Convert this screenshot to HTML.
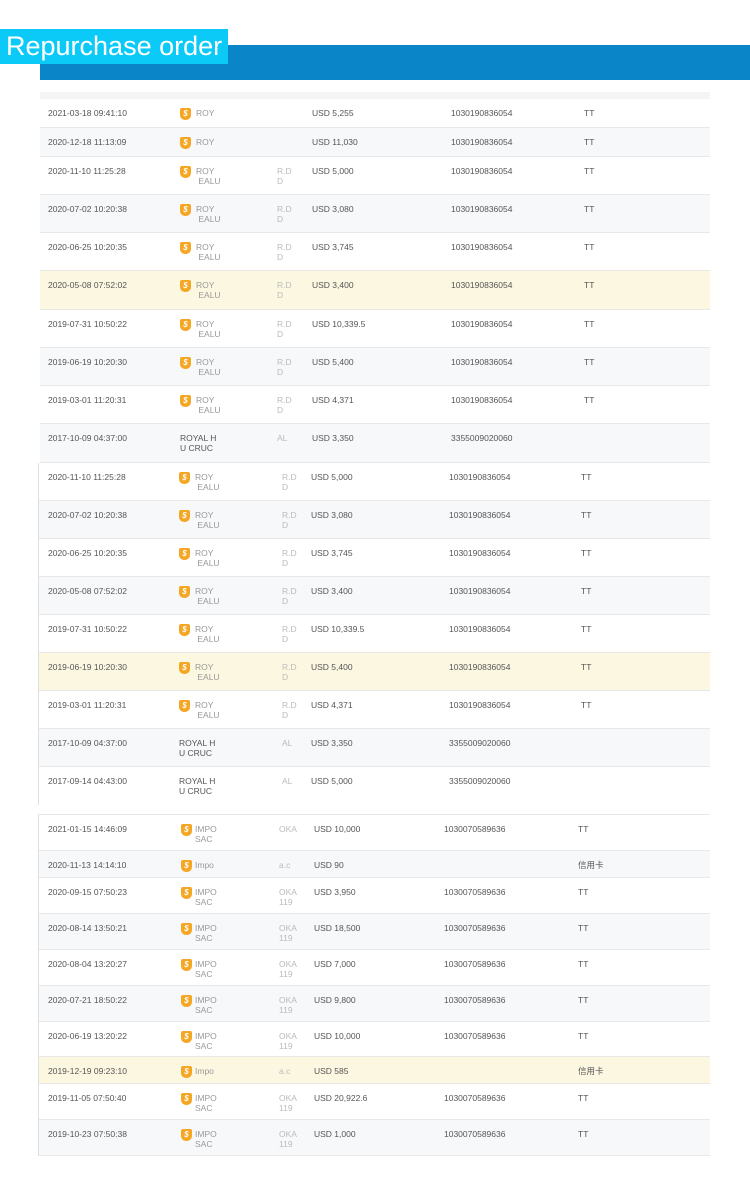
<!DOCTYPE html>
<html><head><meta charset="utf-8">
<style>
*{margin:0;padding:0;box-sizing:border-box}
html,body{width:750px;height:1196px;background:#fff;overflow:hidden;position:relative;font-family:"Liberation Sans","Noto Sans CJK SC",sans-serif;color:#555}
.bar{position:absolute;left:40px;top:45px;width:710px;height:35px;background:#0a86c8}
.ttl{position:absolute;left:0;top:29px;width:228px;height:35px;background:#0ccaf7;color:#fff;font-size:27px;line-height:35px;padding-left:6px}
.sec{position:absolute}
.r{position:absolute;left:0;right:0;border-bottom:1px solid #e8e8e8;font-size:8.5px;line-height:10px}
.g{background:#f7f8fa}
.y{background:#fcf7e1}
.r span{position:absolute;top:9px;white-space:nowrap}
.i{display:inline-block;width:11px;height:12px;background:#f5a623;border-radius:2px 2px 5px 5px;color:#fff;font-size:8px;line-height:12px;text-align:center;font-weight:bold}
.n{color:#999}
.r span.f{color:#bbb}
</style></head><body>
<div class="bar"></div>
<div class="ttl">Repurchase order</div>

<div class="sec" style="left:40px;top:92px;width:670px;height:371px;">
<div class="r" style="top:0;height:7px;background:#f5f5f5;border:none"></div>
<div class="r" style="top:7px;height:29px"><span style="left:8px">2021-03-18 09:41:10</span><span style="left:140px"><i class="i">$</i></span><span class="n" style="left:156px">ROY</span><span style="left:272px">USD 5,255</span><span style="left:411px">1030190836054</span><span style="left:544px">TT</span></div>
<div class="r g" style="top:36px;height:29px"><span style="left:8px">2020-12-18 11:13:09</span><span style="left:140px"><i class="i">$</i></span><span class="n" style="left:156px">ROY</span><span style="left:272px">USD 11,030</span><span style="left:411px">1030190836054</span><span style="left:544px">TT</span></div>
<div class="r" style="top:65px;height:38px"><span style="left:8px">2020-11-10 11:25:28</span><span style="left:140px"><i class="i">$</i></span><span class="n" style="left:156px">ROY<br>&nbsp;EALU</span><span class="f" style="left:237px">R.D<br>D</span><span style="left:272px">USD 5,000</span><span style="left:411px">1030190836054</span><span style="left:544px">TT</span></div>
<div class="r g" style="top:103px;height:38px"><span style="left:8px">2020-07-02 10:20:38</span><span style="left:140px"><i class="i">$</i></span><span class="n" style="left:156px">ROY<br>&nbsp;EALU</span><span class="f" style="left:237px">R.D<br>D</span><span style="left:272px">USD 3,080</span><span style="left:411px">1030190836054</span><span style="left:544px">TT</span></div>
<div class="r" style="top:141px;height:38px"><span style="left:8px">2020-06-25 10:20:35</span><span style="left:140px"><i class="i">$</i></span><span class="n" style="left:156px">ROY<br>&nbsp;EALU</span><span class="f" style="left:237px">R.D<br>D</span><span style="left:272px">USD 3,745</span><span style="left:411px">1030190836054</span><span style="left:544px">TT</span></div>
<div class="r y" style="top:179px;height:39px"><span style="left:8px">2020-05-08 07:52:02</span><span style="left:140px"><i class="i">$</i></span><span class="n" style="left:156px">ROY<br>&nbsp;EALU</span><span class="f" style="left:237px">R.D<br>D</span><span style="left:272px">USD 3,400</span><span style="left:411px">1030190836054</span><span style="left:544px">TT</span></div>
<div class="r" style="top:218px;height:38px"><span style="left:8px">2019-07-31 10:50:22</span><span style="left:140px"><i class="i">$</i></span><span class="n" style="left:156px">ROY<br>&nbsp;EALU</span><span class="f" style="left:237px">R.D<br>D</span><span style="left:272px">USD 10,339.5</span><span style="left:411px">1030190836054</span><span style="left:544px">TT</span></div>
<div class="r g" style="top:256px;height:38px"><span style="left:8px">2019-06-19 10:20:30</span><span style="left:140px"><i class="i">$</i></span><span class="n" style="left:156px">ROY<br>&nbsp;EALU</span><span class="f" style="left:237px">R.D<br>D</span><span style="left:272px">USD 5,400</span><span style="left:411px">1030190836054</span><span style="left:544px">TT</span></div>
<div class="r" style="top:294px;height:38px"><span style="left:8px">2019-03-01 11:20:31</span><span style="left:140px"><i class="i">$</i></span><span class="n" style="left:156px">ROY<br>&nbsp;EALU</span><span class="f" style="left:237px">R.D<br>D</span><span style="left:272px">USD 4,371</span><span style="left:411px">1030190836054</span><span style="left:544px">TT</span></div>
<div class="r g" style="top:332px;height:39px"><span style="left:8px">2017-10-09 04:37:00</span><span style="left:140px">ROYAL H<br>U CRUC</span><span class="f" style="left:237px">AL</span><span style="left:272px">USD 3,350</span><span style="left:411px">3355009020060</span></div>
</div>

<div class="sec" style="left:38px;top:463px;width:672px;height:342px;border-left:1px solid #e0e0e0">
<div class="r" style="top:0;height:38px"><span style="left:9px">2020-11-10 11:25:28</span><span style="left:140px"><i class="i">$</i></span><span class="n" style="left:156px">ROY<br>&nbsp;EALU</span><span class="f" style="left:243px">R.D<br>D</span><span style="left:272px">USD 5,000</span><span style="left:410px">1030190836054</span><span style="left:542px">TT</span></div>
<div class="r g" style="top:38px;height:38px"><span style="left:9px">2020-07-02 10:20:38</span><span style="left:140px"><i class="i">$</i></span><span class="n" style="left:156px">ROY<br>&nbsp;EALU</span><span class="f" style="left:243px">R.D<br>D</span><span style="left:272px">USD 3,080</span><span style="left:410px">1030190836054</span><span style="left:542px">TT</span></div>
<div class="r" style="top:76px;height:38px"><span style="left:9px">2020-06-25 10:20:35</span><span style="left:140px"><i class="i">$</i></span><span class="n" style="left:156px">ROY<br>&nbsp;EALU</span><span class="f" style="left:243px">R.D<br>D</span><span style="left:272px">USD 3,745</span><span style="left:410px">1030190836054</span><span style="left:542px">TT</span></div>
<div class="r g" style="top:114px;height:38px"><span style="left:9px">2020-05-08 07:52:02</span><span style="left:140px"><i class="i">$</i></span><span class="n" style="left:156px">ROY<br>&nbsp;EALU</span><span class="f" style="left:243px">R.D<br>D</span><span style="left:272px">USD 3,400</span><span style="left:410px">1030190836054</span><span style="left:542px">TT</span></div>
<div class="r" style="top:152px;height:38px"><span style="left:9px">2019-07-31 10:50:22</span><span style="left:140px"><i class="i">$</i></span><span class="n" style="left:156px">ROY<br>&nbsp;EALU</span><span class="f" style="left:243px">R.D<br>D</span><span style="left:272px">USD 10,339.5</span><span style="left:410px">1030190836054</span><span style="left:542px">TT</span></div>
<div class="r y" style="top:190px;height:38px"><span style="left:9px">2019-06-19 10:20:30</span><span style="left:140px"><i class="i">$</i></span><span class="n" style="left:156px">ROY<br>&nbsp;EALU</span><span class="f" style="left:243px">R.D<br>D</span><span style="left:272px">USD 5,400</span><span style="left:410px">1030190836054</span><span style="left:542px">TT</span></div>
<div class="r" style="top:228px;height:38px"><span style="left:9px">2019-03-01 11:20:31</span><span style="left:140px"><i class="i">$</i></span><span class="n" style="left:156px">ROY<br>&nbsp;EALU</span><span class="f" style="left:243px">R.D<br>D</span><span style="left:272px">USD 4,371</span><span style="left:410px">1030190836054</span><span style="left:542px">TT</span></div>
<div class="r g" style="top:266px;height:38px"><span style="left:9px">2017-10-09 04:37:00</span><span style="left:140px">ROYAL H<br>U CRUC</span><span class="f" style="left:243px">AL</span><span style="left:272px">USD 3,350</span><span style="left:410px">3355009020060</span></div>
<div class="r" style="top:304px;height:38px;border:none"><span style="left:9px">2017-09-14 04:43:00</span><span style="left:140px">ROYAL H<br>U CRUC</span><span class="f" style="left:243px">AL</span><span style="left:272px">USD 5,000</span><span style="left:410px">3355009020060</span></div>
</div>

<div class="sec" style="left:38px;top:814px;width:672px;height:342px;border-left:1px solid #e0e0e0;border-top:1px solid #e8e8e8">
<div class="r" style="top:0;height:36px"><span style="left:9px">2021-01-15 14:46:09</span><span style="left:142px"><i class="i">$</i></span><span class="n" style="left:156px">IMPO<br>SAC</span><span class="f" style="left:240px">OKA</span><span style="left:275px">USD 10,000</span><span style="left:405px">1030070589636</span><span style="left:539px">TT</span></div>
<div class="r g" style="top:36px;height:27px"><span style="left:9px">2020-11-13 14:14:10</span><span style="left:142px"><i class="i">$</i></span><span class="n" style="left:156px">Impo</span><span class="f" style="left:240px">a.c</span><span style="left:275px">USD 90</span><span style="left:539px">信用卡</span></div>
<div class="r" style="top:63px;height:36px"><span style="left:9px">2020-09-15 07:50:23</span><span style="left:142px"><i class="i">$</i></span><span class="n" style="left:156px">IMPO<br>SAC</span><span class="f" style="left:240px">OKA<br>119</span><span style="left:275px">USD 3,950</span><span style="left:405px">1030070589636</span><span style="left:539px">TT</span></div>
<div class="r g" style="top:99px;height:36px"><span style="left:9px">2020-08-14 13:50:21</span><span style="left:142px"><i class="i">$</i></span><span class="n" style="left:156px">IMPO<br>SAC</span><span class="f" style="left:240px">OKA<br>119</span><span style="left:275px">USD 18,500</span><span style="left:405px">1030070589636</span><span style="left:539px">TT</span></div>
<div class="r" style="top:135px;height:36px"><span style="left:9px">2020-08-04 13:20:27</span><span style="left:142px"><i class="i">$</i></span><span class="n" style="left:156px">IMPO<br>SAC</span><span class="f" style="left:240px">OKA<br>119</span><span style="left:275px">USD 7,000</span><span style="left:405px">1030070589636</span><span style="left:539px">TT</span></div>
<div class="r g" style="top:171px;height:36px"><span style="left:9px">2020-07-21 18:50:22</span><span style="left:142px"><i class="i">$</i></span><span class="n" style="left:156px">IMPO<br>SAC</span><span class="f" style="left:240px">OKA<br>119</span><span style="left:275px">USD 9,800</span><span style="left:405px">1030070589636</span><span style="left:539px">TT</span></div>
<div class="r" style="top:207px;height:35px"><span style="left:9px">2020-06-19 13:20:22</span><span style="left:142px"><i class="i">$</i></span><span class="n" style="left:156px">IMPO<br>SAC</span><span class="f" style="left:240px">OKA<br>119</span><span style="left:275px">USD 10,000</span><span style="left:405px">1030070589636</span><span style="left:539px">TT</span></div>
<div class="r y" style="top:242px;height:27px"><span style="left:9px">2019-12-19 09:23:10</span><span style="left:142px"><i class="i">$</i></span><span class="n" style="left:156px">Impo</span><span class="f" style="left:240px">a.c</span><span style="left:275px">USD 585</span><span style="left:539px">信用卡</span></div>
<div class="r" style="top:269px;height:36px"><span style="left:9px">2019-11-05 07:50:40</span><span style="left:142px"><i class="i">$</i></span><span class="n" style="left:156px">IMPO<br>SAC</span><span class="f" style="left:240px">OKA<br>119</span><span style="left:275px">USD 20,922.6</span><span style="left:405px">1030070589636</span><span style="left:539px">TT</span></div>
<div class="r g" style="top:305px;height:36px"><span style="left:9px">2019-10-23 07:50:38</span><span style="left:142px"><i class="i">$</i></span><span class="n" style="left:156px">IMPO<br>SAC</span><span class="f" style="left:240px">OKA<br>119</span><span style="left:275px">USD 1,000</span><span style="left:405px">1030070589636</span><span style="left:539px">TT</span></div>
</div>
</body></html>
